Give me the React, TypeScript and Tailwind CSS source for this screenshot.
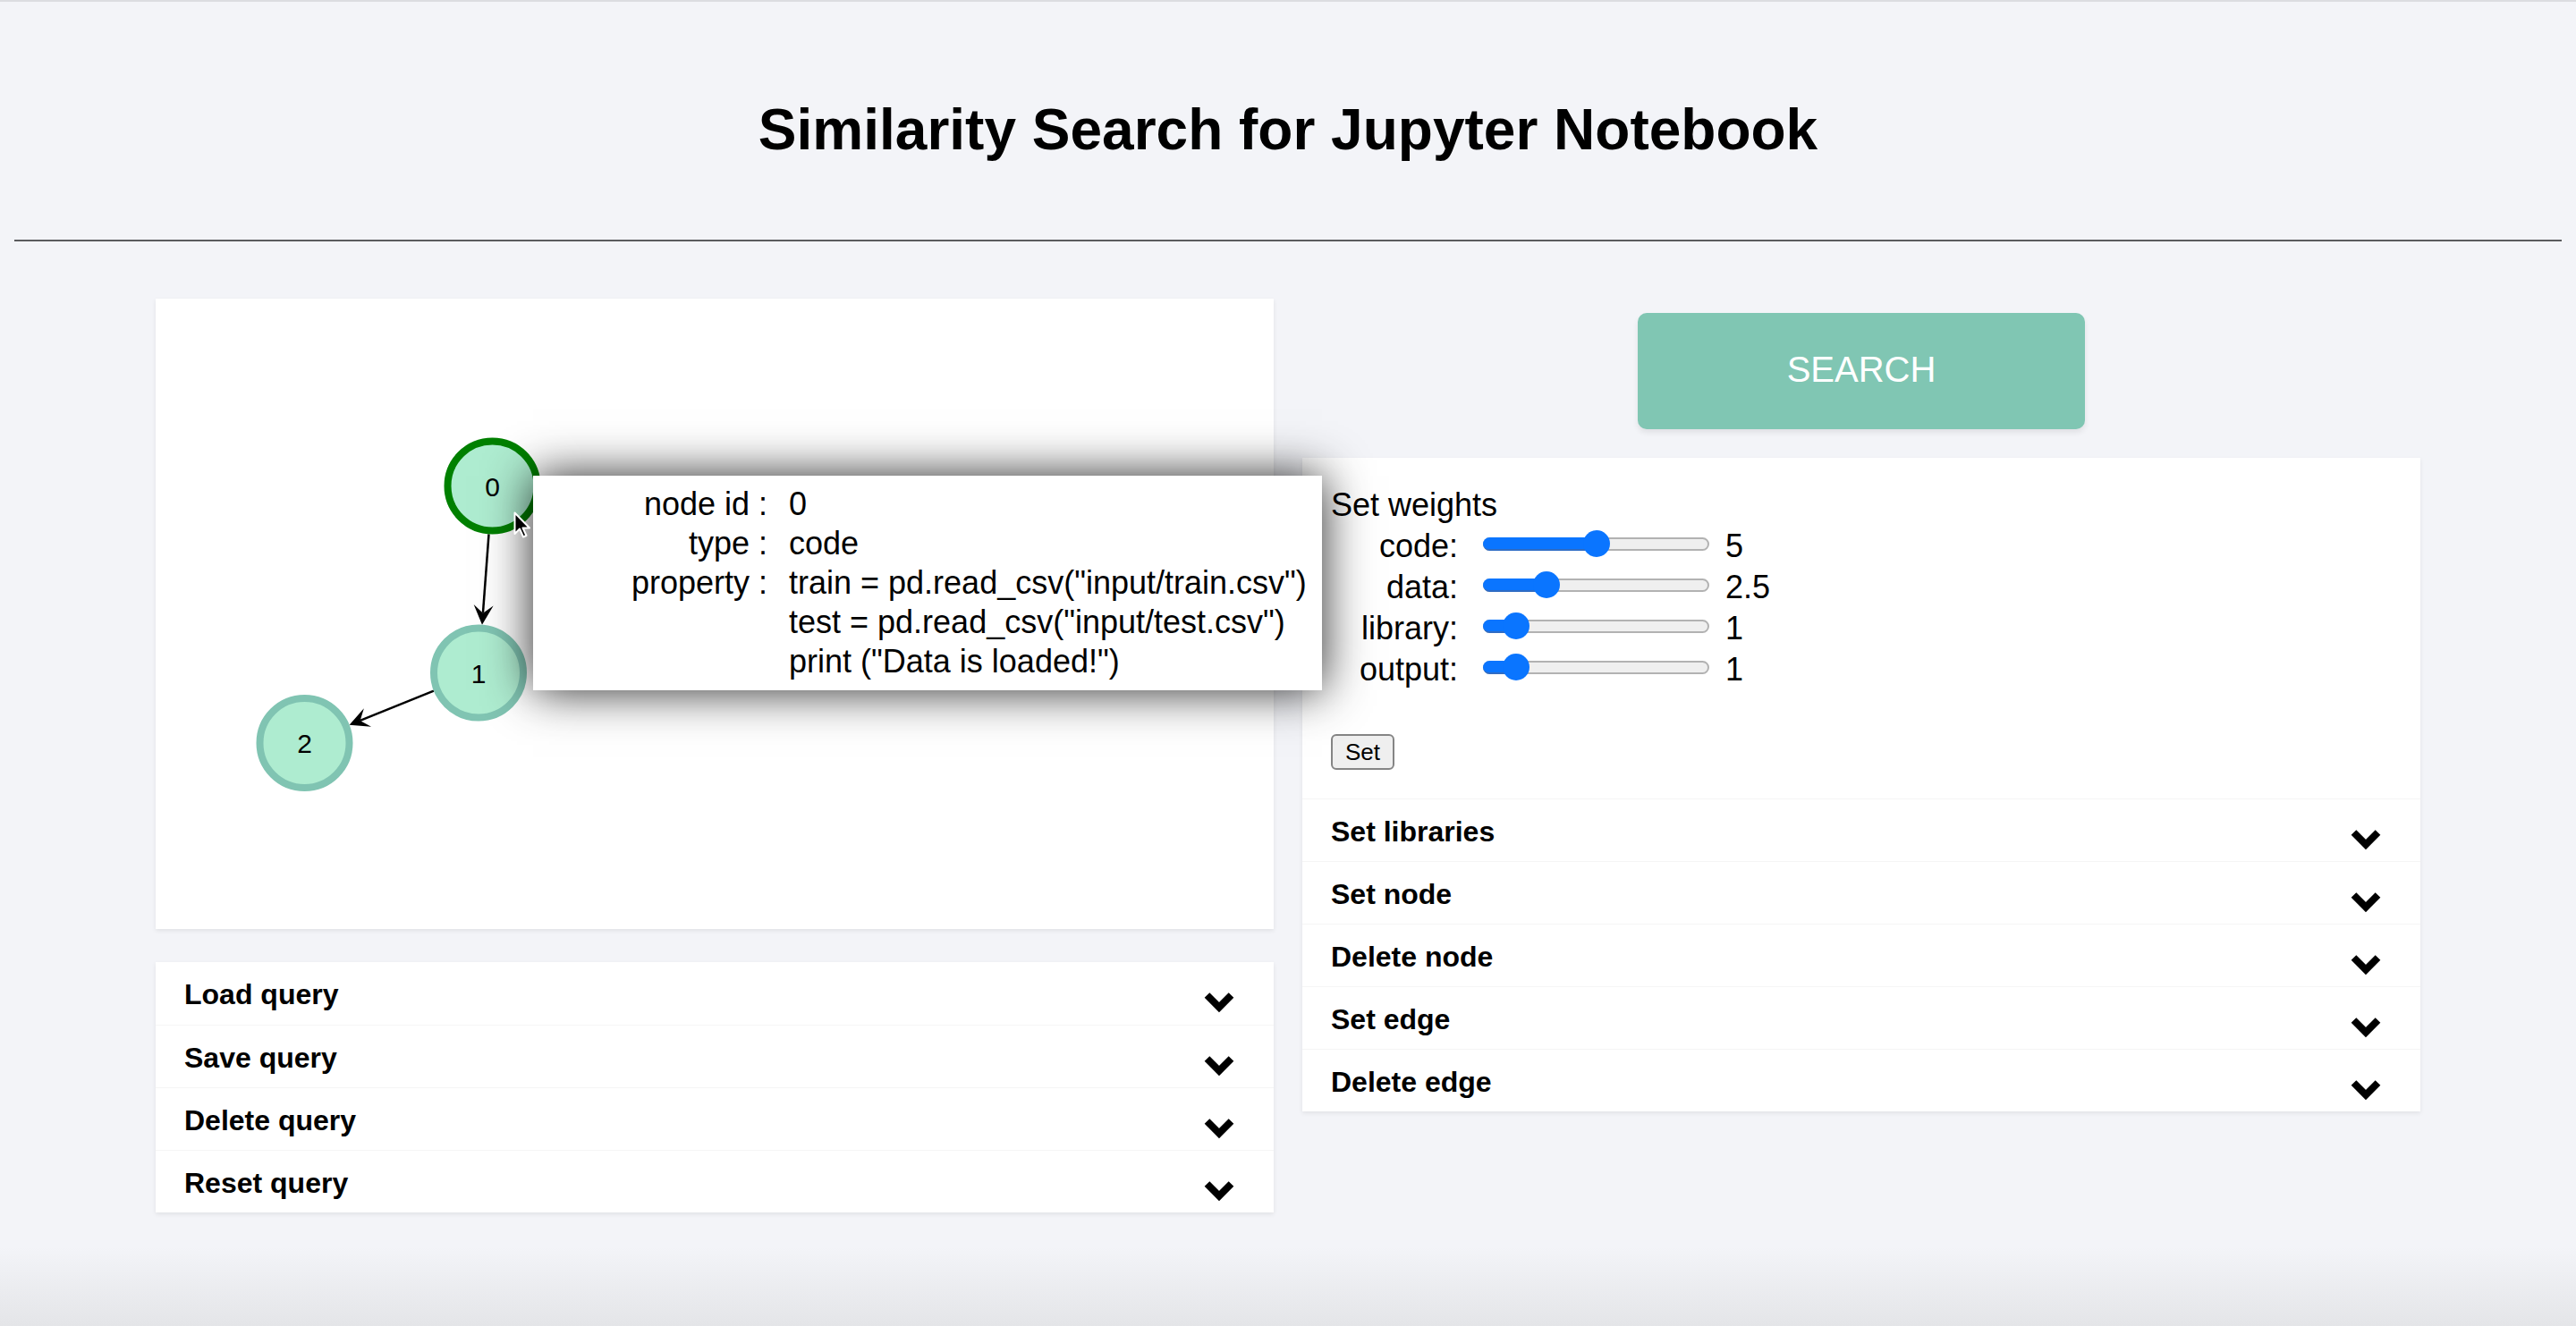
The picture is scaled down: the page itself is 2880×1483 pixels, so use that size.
import React from "react";

type GNode = { id: number; x: number; y: number; stroke: string };

const nodes: GNode[] = [
  { id: 0, x: 376.5, y: 209.5, stroke: "#008000" },
  { id: 1, x: 361, y: 418.5, stroke: "#80c4b2" },
  { id: 2, x: 166.5, y: 497, stroke: "#80c4b2" },
];

const edges: [number, number][] = [
  [0, 1],
  [1, 2],
];

const weights = [
  { name: "code:", value: 5 },
  { name: "data:", value: 2.5 },
  { name: "library:", value: 1 },
  { name: "output:", value: 1 },
];

const R = 54; // outer radius incl. stroke

function Edge({ from, to }: { from: GNode; to: GNode }) {
  const dx = to.x - from.x;
  const dy = to.y - from.y;
  const len = Math.hypot(dx, dy);
  const ux = dx / len;
  const uy = dy / len;
  const sx = from.x + ux * R;
  const sy = from.y + uy * R;
  const tx = to.x - ux * R;
  const ty = to.y - uy * R;
  const bx = tx - ux * 22;
  const by = ty - uy * 22;
  const nx = tx - ux * 13;
  const ny = ty - uy * 13;
  const px = -uy * 11;
  const py = ux * 11;
  const head = `${tx},${ty} ${bx + px},${by + py} ${nx},${ny} ${bx - px},${by - py}`;
  return (
    <g>
      <line x1={sx} y1={sy} x2={nx} y2={ny} stroke="#000" strokeWidth={2.5} />
      <polygon points={head} fill="#000" />
    </g>
  );
}

function Chevron() {
  return (
    <svg width="32" height="24" viewBox="0 0 32 24" className="mt-[34px] mr-[13px] shrink-0 overflow-visible">
      <polyline points="2.5,3 16,16.5 29.5,3" fill="none" stroke="#000" strokeWidth="8" strokeLinejoin="miter" />
    </svg>
  );
}

function AccordionRow({ label, first }: { label: string; first?: boolean }) {
  return (
    <div
      className={`flex h-[70px] items-start justify-between px-[32px] ${
        first ? "" : "border-t border-[#f5f5f5]"
      }`}
    >
      <span className="pt-[18px] text-[32px] font-bold leading-[37px]">{label}</span>
      <Chevron />
    </div>
  );
}

function Slider({ value }: { value: number }) {
  const center = 14 + (value / 10) * 226;
  return (
    <div className="relative flex h-[30px] w-[253px] items-center">
      <div className="h-[15px] w-full rounded-full border-[2px] border-[#b2b2b2] bg-[#efefef]" />
      <div
        className="absolute left-0 top-[7.5px] h-[15px] rounded-full border-b-[2px] border-[#2f6cc4] bg-[#0a75ff]"
        style={{ width: center }}
      />
      <div
        className="absolute top-0 h-[30px] w-[30px] rounded-full bg-[#0a75ff]"
        style={{ left: center - 15 }}
      />
    </div>
  );
}

export default function App() {
  return (
    <div
      className="h-[1483px] w-full overflow-hidden bg-[linear-gradient(180deg,#f3f4f8_1395px,#e4e5e8_1483px)] text-black"
      style={{ fontFamily: '"Liberation Sans", Arial, Helvetica, sans-serif' }}
    >
      {/* browser edge */}
      <div className="h-[2px] bg-[#dcdde1]" />

      {/* header */}
      <h1 className="mt-[106px] text-center text-[64px] font-bold leading-[74px]">
        Similarity Search for Jupyter Notebook
      </h1>
      <div className="mx-[16px] mt-[86px] h-[2px] bg-[#5a5b5e]" />

      {/* main */}
      <div className="mt-[64px] flex justify-center gap-[32px]">
        {/* left column */}
        <div className="relative z-10 flex w-[1250px] flex-col">
          <div className="relative h-[705px] bg-white shadow-[0_2px_5px_rgba(0,0,0,0.08)]">
            <svg className="block h-full w-full" viewBox="0 0 1250 705">
              {edges.map(([a, b]) => (
                <Edge key={`${a}-${b}`} from={nodes[a]} to={nodes[b]} />
              ))}
              {nodes.map((n) => (
                <g key={n.id}>
                  <circle cx={n.x} cy={n.y} r={50} fill="#aeecd0" stroke={n.stroke} strokeWidth={8} />
                  <text
                    x={n.x}
                    y={n.y + 11}
                    textAnchor="middle"
                    fontSize="30"
                    fill="#000"
                    fontFamily='"Liberation Sans", Arial, sans-serif'
                  >
                    {n.id}
                  </text>
                </g>
              ))}
            </svg>

            {/* hover tooltip */}
            <div className="absolute left-[422px] top-[198px] z-20 h-[240px] w-[882px] bg-white px-[10px] py-[10px] shadow-[0_0_50px_rgba(0,0,0,0.85)]">
              <div className="grid grid-cols-[252px_1fr] gap-x-[24px] text-[36px] leading-[44px]">
                <span className="text-right">node id :</span>
                <span>0</span>
                <span className="text-right">type :</span>
                <span>code</span>
                <span className="text-right">property :</span>
                <div className="flex flex-col whitespace-pre">
                  <span>train = pd.read_csv("input/train.csv")</span>
                  <span>test = pd.read_csv("input/test.csv")</span>
                  <span>print ("Data is loaded!")</span>
                </div>
              </div>
            </div>

            {/* mouse pointer */}
            <svg
              className="absolute left-[400px] top-[238px] z-30"
              width="20"
              height="30"
              viewBox="0 0 20 30"
            >
              <path
                d="M1.5 1.5 V25 L7 19.5 L11 28.5 L14.5 27 L10.5 18.5 H18 Z"
                fill="#000"
                stroke="#fff"
                strokeWidth="2"
                strokeLinejoin="round"
              />
            </svg>
          </div>

          <div className="mt-[37px] bg-white shadow-[0_2px_5px_rgba(0,0,0,0.08)]">
            <AccordionRow label="Load query" first />
            <AccordionRow label="Save query" />
            <AccordionRow label="Delete query" />
            <AccordionRow label="Reset query" />
          </div>
        </div>

        {/* right column */}
        <div className="flex w-[1250px] flex-col pt-[16px]">
          <button className="mx-auto flex h-[130px] w-[500px] items-center justify-center rounded-[10px] bg-[#80c6b3] pb-[4px] text-[40px] text-white shadow-[0_4px_6px_rgba(0,0,0,0.08)]">
            SEARCH
          </button>

          <div className="mt-[32px] bg-white shadow-[0_2px_5px_rgba(0,0,0,0.08)]">
            <div className="px-[32px] pb-[32px] pt-[32px]">
              <div className="text-[36px] leading-[41px]">Set weights</div>
              {weights.map((w) => (
                <div key={w.name} className="flex h-[46px] items-center">
                  <span className="mt-[4px] w-[142px] text-right text-[36px] leading-[41px]">{w.name}</span>
                  <div className="ml-[28px]">
                    <Slider value={w.value} />
                  </div>
                  <span className="ml-[18px] mt-[4px] text-[36px] leading-[41px]">{w.value}</span>
                </div>
              ))}
              <button className="mt-[52px] h-[40px] w-[71px] rounded-[6px] border-[2px] border-[#858585] bg-[#efefef] text-[26px] leading-[30px]">
                Set
              </button>
            </div>
            <AccordionRow label="Set libraries" />
            <AccordionRow label="Set node" />
            <AccordionRow label="Delete node" />
            <AccordionRow label="Set edge" />
            <AccordionRow label="Delete edge" />
          </div>
        </div>
      </div>
    </div>
  );
}
